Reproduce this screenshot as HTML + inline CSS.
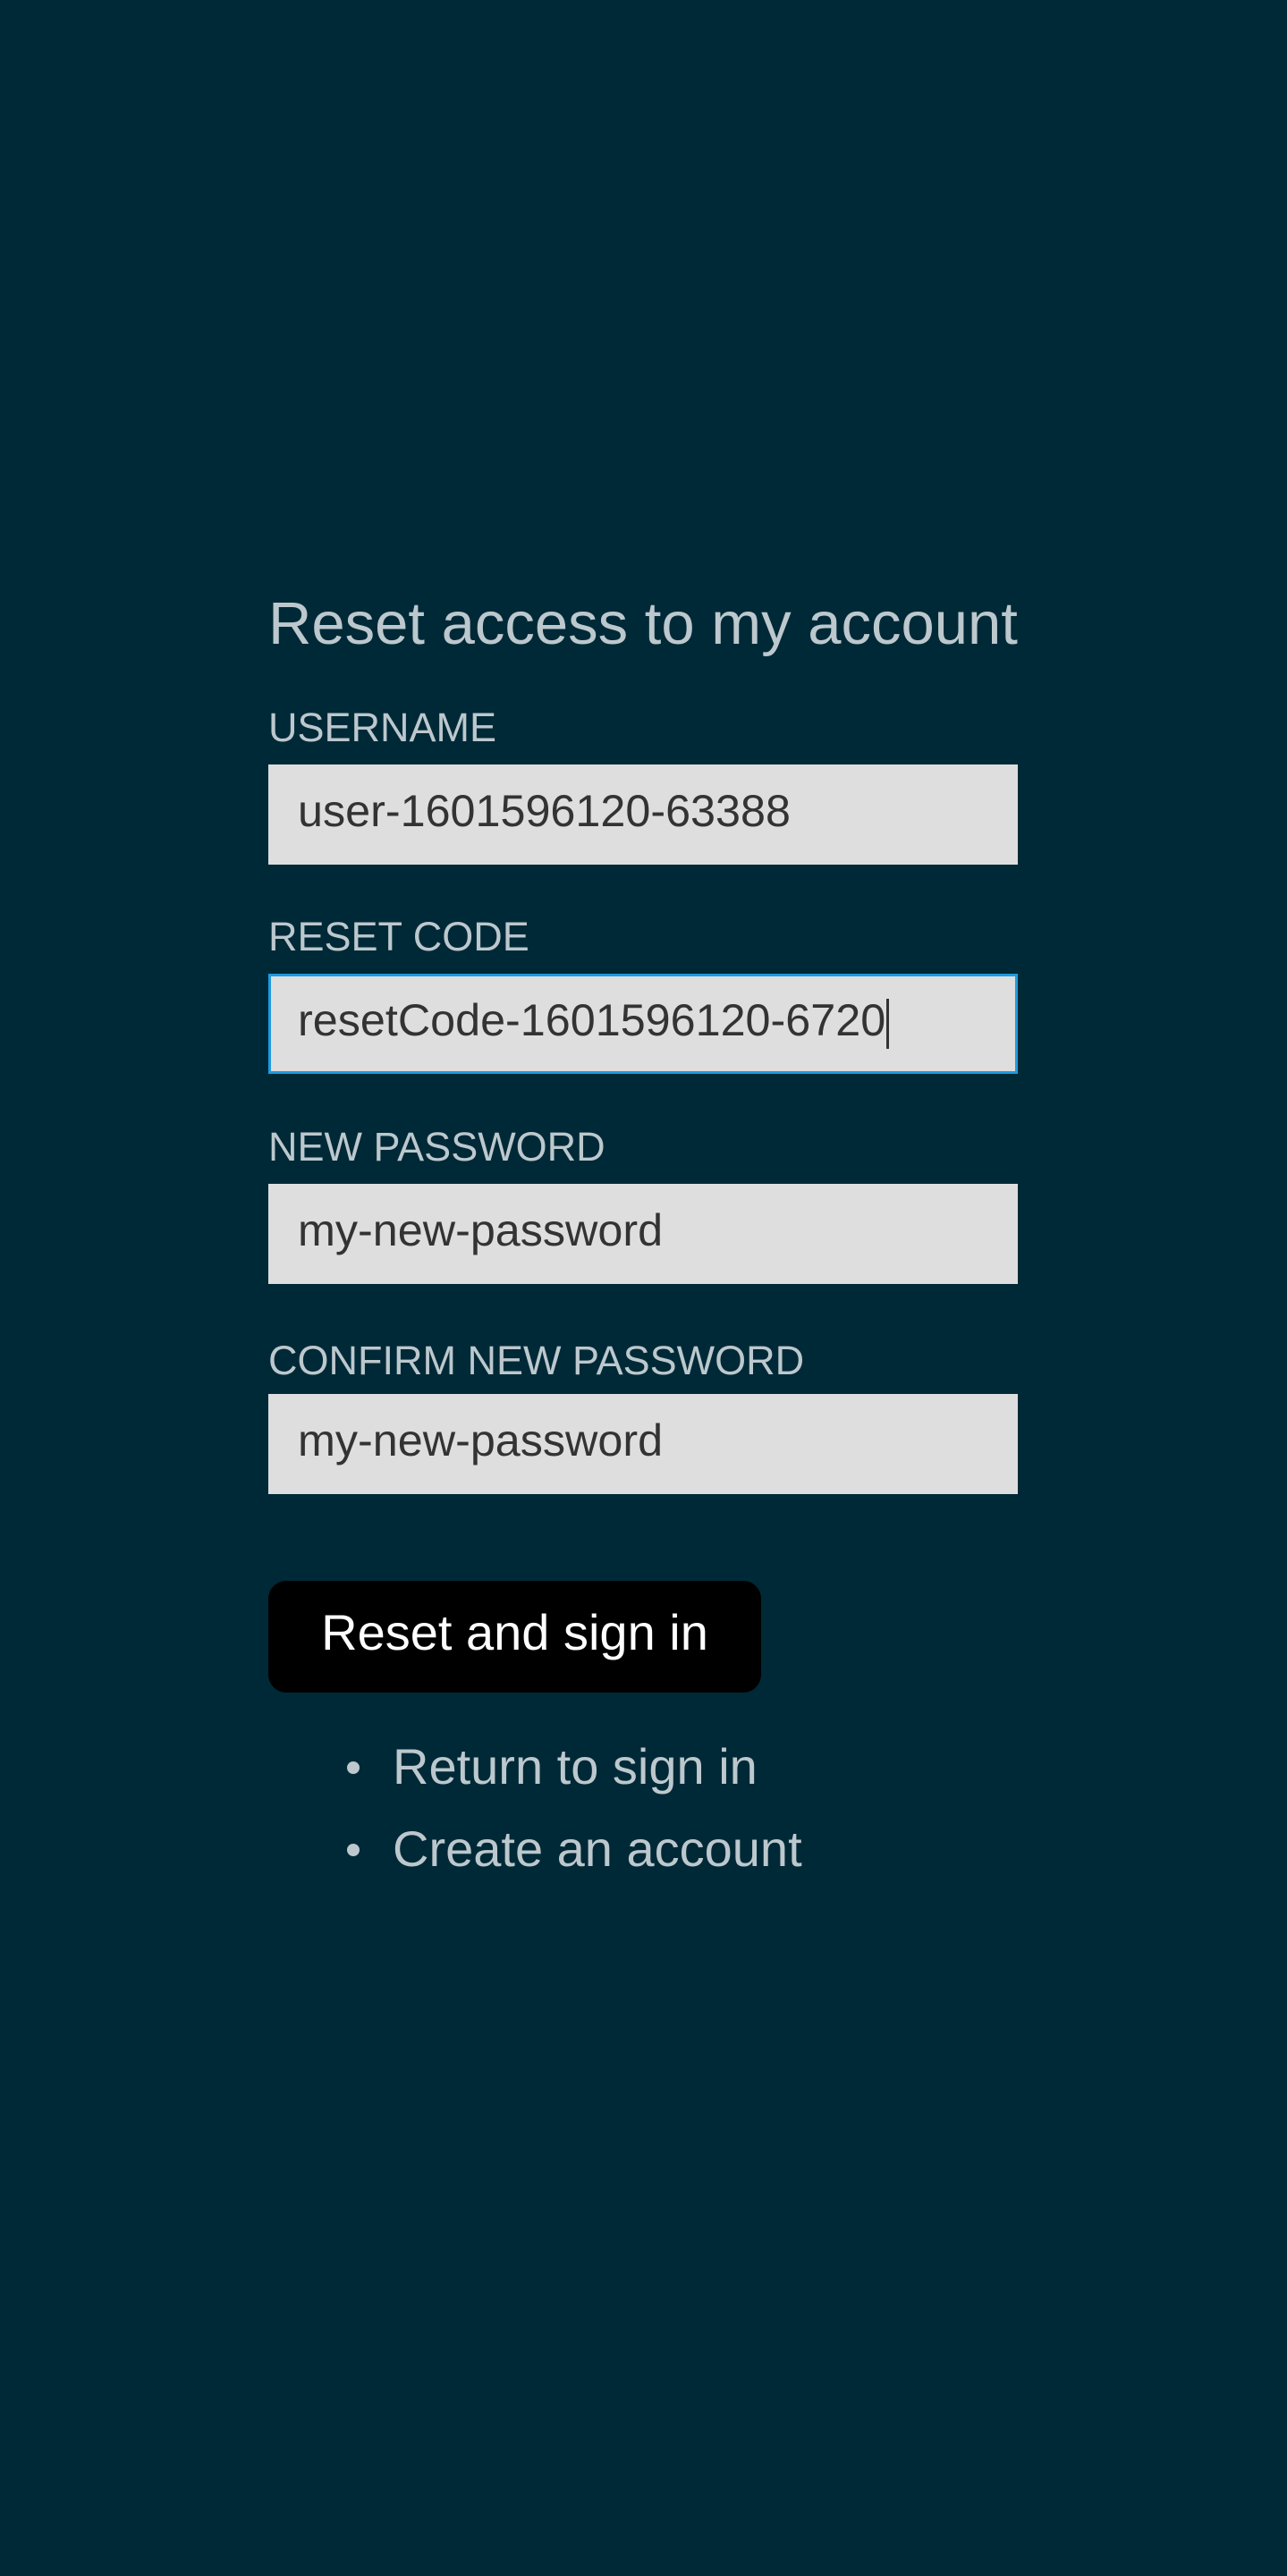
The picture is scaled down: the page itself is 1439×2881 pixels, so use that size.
<!DOCTYPE html>
<html><head><meta charset="utf-8"><style>
html,body{margin:0;padding:0}
body{width:1439px;height:2881px;background:#002937;font-family:"Liberation Sans",sans-serif;position:relative;overflow:hidden}
h1{position:absolute;left:300px;top:658px;margin:0;font-weight:normal;font-size:67px;line-height:80px;color:#bcc8cd}
.lbl{position:absolute;left:300px;font-size:45px;line-height:50px;color:#bcc8cd}
.in{position:absolute;left:300px;width:838px;height:112px;background:#dedede;box-sizing:border-box;padding-left:33px;font-size:50.3px;line-height:104px;color:#333}
.focus{border:3px solid #1d9be0;padding-left:30px;line-height:98px}
.btn{position:absolute;left:300px;top:1768px;width:551px;height:125px;background:#000;border-radius:20px;color:#fff;font-size:56px;line-height:115px;text-align:center}
.li{position:absolute;left:439px;font-size:56px;line-height:70px;color:#bcc8cd}
.dot{position:absolute;left:388px;width:14px;height:14px;border-radius:50%;background:#bcc8cd}
.caret{display:inline-block;width:3px;height:56px;background:#333;vertical-align:middle;margin-left:1px}
</style></head><body>
<h1>Reset access to my account</h1>
<div class="lbl" style="top:789px">USERNAME</div>
<div class="in" style="top:855px">user-1601596120-63388</div>
<div class="lbl" style="top:1023px">RESET CODE</div>
<div class="in focus" style="top:1089px">resetCode-1601596120-6720<span class="caret"></span></div>
<div class="lbl" style="top:1258px">NEW PASSWORD</div>
<div class="in" style="top:1324px">my-new-password</div>
<div class="lbl" style="top:1497px">CONFIRM NEW PASSWORD</div>
<div class="in" style="top:1559px">my-new-password</div>
<div class="btn">Reset and sign in</div>
<div class="dot" style="top:1970px"></div>
<div class="li" style="top:1941px">Return to sign in</div>
<div class="dot" style="top:2062px"></div>
<div class="li" style="top:2033px">Create an account</div>
</body></html>
